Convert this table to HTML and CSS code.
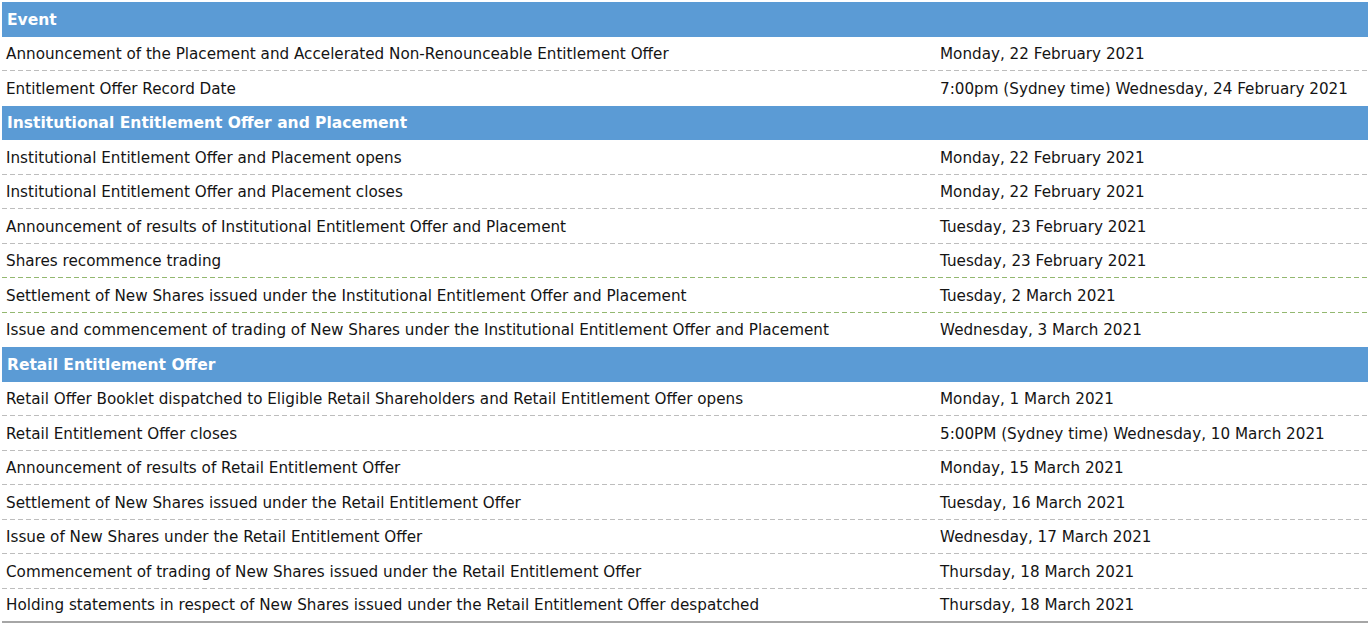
FILE: index.html
```html
<!DOCTYPE html>
<html lang="en">
<head>
<meta charset="utf-8">
<title>Timetable</title>
<link rel="stylesheet" href="styles.css">
</head>
<body>
<div class="table">
  <div class="row head"><div class="c1">Event</div><div class="c2"></div></div>
  <div class="row"><div class="c1">Announcement of the Placement and Accelerated Non-Renounceable Entitlement Offer</div><div class="c2">Monday, 22 February 2021</div></div>
  <div class="row last"><div class="c1">Entitlement Offer Record Date</div><div class="c2">7:00pm (Sydney time) Wednesday, 24 February 2021</div></div>
  <div class="row head"><div class="c1">Institutional Entitlement Offer and Placement</div><div class="c2"></div></div>
  <div class="row"><div class="c1">Institutional Entitlement Offer and Placement opens</div><div class="c2">Monday, 22 February 2021</div></div>
  <div class="row"><div class="c1">Institutional Entitlement Offer and Placement closes</div><div class="c2">Monday, 22 February 2021</div></div>
  <div class="row"><div class="c1">Announcement of results of Institutional Entitlement Offer and Placement</div><div class="c2">Tuesday, 23 February 2021</div></div>
  <div class="row green"><div class="c1">Shares recommence trading</div><div class="c2">Tuesday, 23 February 2021</div></div>
  <div class="row green"><div class="c1">Settlement of New Shares issued under the Institutional Entitlement Offer and Placement</div><div class="c2">Tuesday, 2 March 2021</div></div>
  <div class="row last"><div class="c1">Issue and commencement of trading of New Shares under the Institutional Entitlement Offer and Placement</div><div class="c2">Wednesday, 3 March 2021</div></div>
  <div class="row head"><div class="c1">Retail Entitlement Offer</div><div class="c2"></div></div>
  <div class="row"><div class="c1">Retail Offer Booklet dispatched to Eligible Retail Shareholders and Retail Entitlement Offer opens</div><div class="c2">Monday, 1 March 2021</div></div>
  <div class="row"><div class="c1">Retail Entitlement Offer closes</div><div class="c2">5:00PM (Sydney time) Wednesday, 10 March 2021</div></div>
  <div class="row"><div class="c1">Announcement of results of Retail Entitlement Offer</div><div class="c2">Monday, 15 March 2021</div></div>
  <div class="row"><div class="c1">Settlement of New Shares issued under the Retail Entitlement Offer</div><div class="c2">Tuesday, 16 March 2021</div></div>
  <div class="row"><div class="c1">Issue of New Shares under the Retail Entitlement Offer</div><div class="c2">Wednesday, 17 March 2021</div></div>
  <div class="row"><div class="c1">Commencement of trading of New Shares issued under the Retail Entitlement Offer</div><div class="c2">Thursday, 18 March 2021</div></div>
  <div class="row final"><div class="c1">Holding statements in respect of New Shares issued under the Retail Entitlement Offer despatched</div><div class="c2">Thursday, 18 March 2021</div></div>
</div>
</body>
</html>
```
FILE: styles.css
```css
html, body {
  margin: 0;
  padding: 0;
  background: #ffffff;
}
body {
  font-family: "DejaVu Sans", Verdana, sans-serif;
  font-size: 15.2px;
  color: #141414;
}
.table {
  margin: 2px 0 0 2px;
  width: 1366px;
  display: flex;
  flex-direction: column;
}
.row {
  display: flex;
  align-items: center;
  height: 34.5px;
  padding-top: 1px;
  box-sizing: border-box;
  background-image: repeating-linear-gradient(to right, #bdbdbd 0 5px, transparent 5px 8px);
  background-size: 100% 1px;
  background-position: left bottom;
  background-repeat: no-repeat;
}
.row.green {
  background-image: repeating-linear-gradient(to right, #93b870 0 5px, transparent 5px 8px);
}
.row.last {
  background-image: none;
}
.row.final {
  background-image: none;
  border-bottom: 2px solid #a6a6a6;
}
.row.head {
  background: #5b9bd5;
  color: #ffffff;
  font-weight: bold;
  font-size: 15.5px;
}
.c1 {
  width: 933px;
  padding-left: 4px;
  box-sizing: border-box;
  white-space: nowrap;
}
.head .c1 {
  padding-left: 5px;
}
.c2 {
  flex: 1;
  padding-left: 5px;
  white-space: nowrap;
}
```
